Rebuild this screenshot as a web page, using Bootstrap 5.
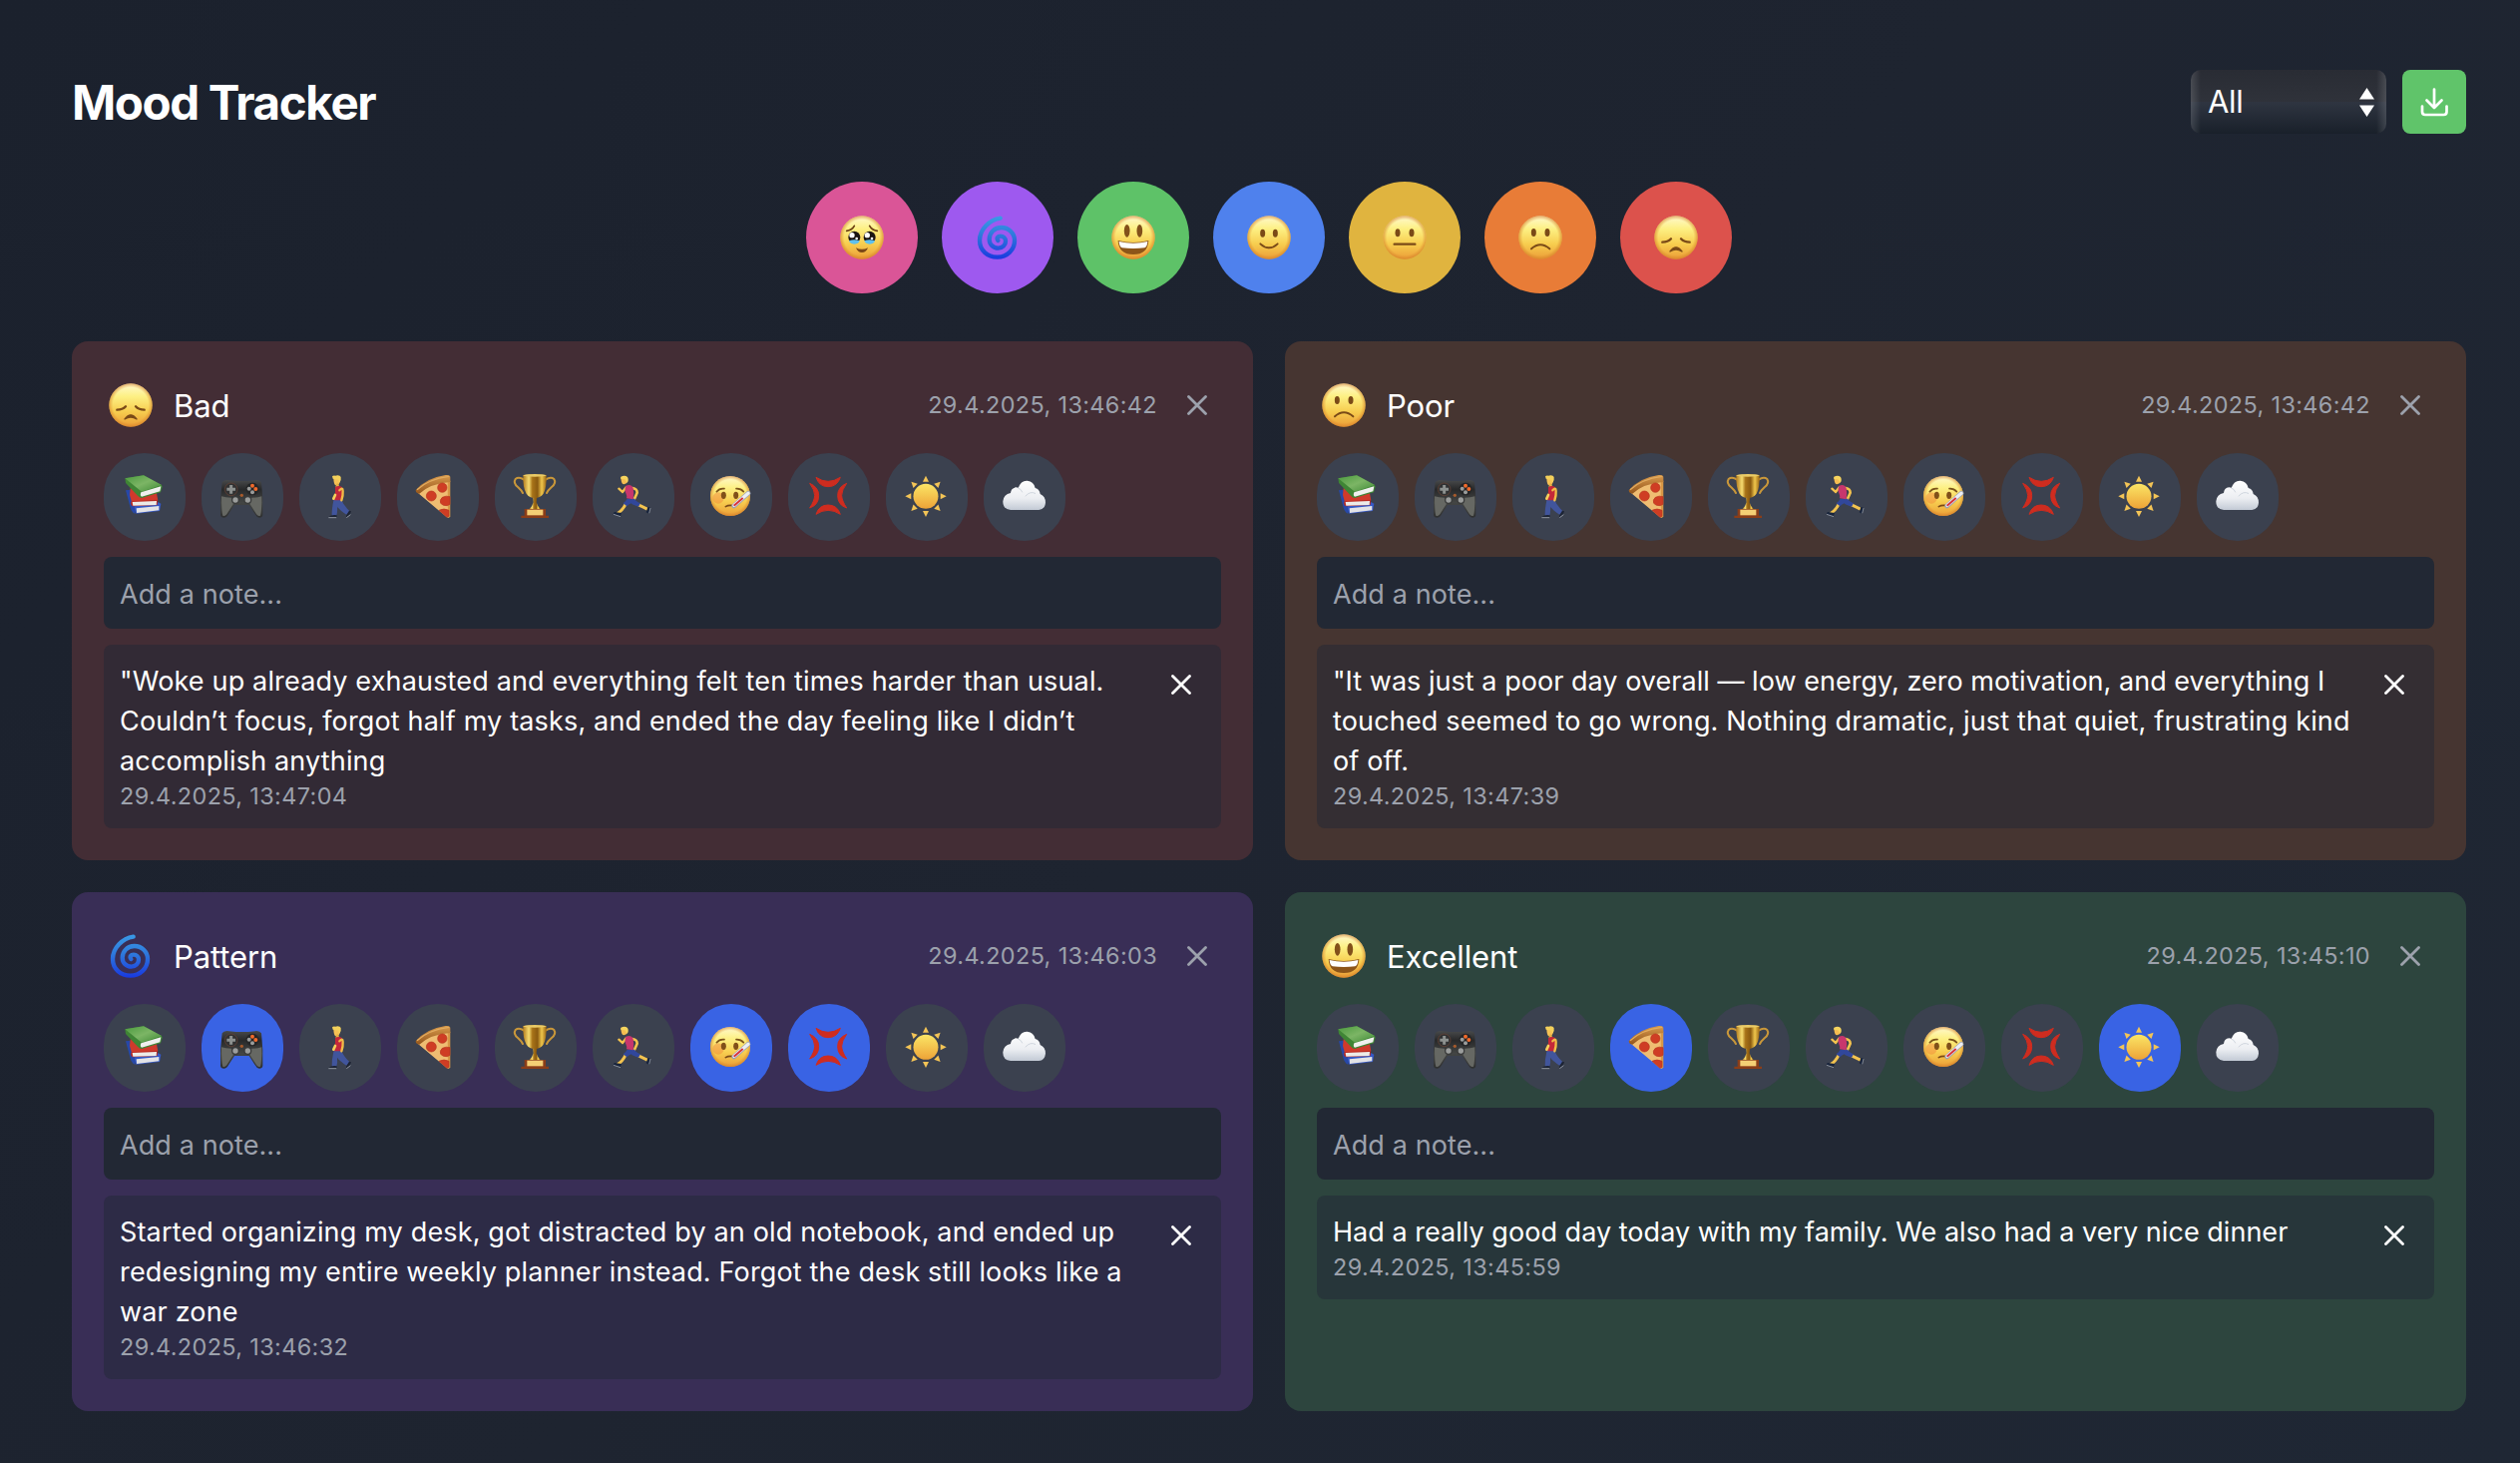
<!DOCTYPE html>
<html lang="en">
<head>
<meta charset="utf-8">
<title>Mood Tracker</title>
<link rel="stylesheet" href="https://cdn.jsdelivr.net/npm/bootstrap@5.3.0/dist/css/bootstrap.min.css">
<style>
body{font-family:Inter,"Liberation Sans",sans-serif;color:#fff;background:linear-gradient(135deg,#1b212d 0%,#1e2430 50%,#1f2734 100%);min-height:1466px;padding:70px 54px 52px 72px}
.app-title{font-size:47.5px;font-weight:700;line-height:62px;padding-top:2px;letter-spacing:-1.4px}
.filter-wrap{width:196px;height:64px}
.filter-select{appearance:none;width:100%;height:100%;border:0;border-radius:10px;color:#fff;font-size:31px;letter-spacing:-.3px;padding:1px 0 0 17px;outline:0;
background:linear-gradient(90deg,rgba(255,255,255,.14),transparent) 0 0/10px 100% no-repeat,linear-gradient(270deg,rgba(255,255,255,.14),transparent) 100% 0/10px 100% no-repeat,linear-gradient(#292c34 0,#2f323a 50%,#2f3541 50%,#19202a 100%)}
.filter-arrows{right:12px;top:18px;pointer-events:none}
.save-btn{width:64px;height:64px;border-radius:8px;background:#60c46a}
.mood-btn{width:112px;height:112px}
.mood-row{gap:24px;margin:48px 0}
.entries{--bs-gutter-x:32px;--bs-gutter-y:32px}
.entry{border:0;border-radius:16px;padding:32px;gap:16px;color:#fff;height:520px}
.entry-head{height:64px;padding:0 14px 0 5px}
.entry-name{font-size:31px;line-height:40px;margin-left:21px;padding-top:2px;letter-spacing:-.1px}
.stamp{font-size:23.4px;line-height:32px;color:#9ca1ac;letter-spacing:.38px}
.head-x{margin-left:30px}
.chips{gap:16px}
.chip{width:82px;height:88px;background:#3b414f;border-radius:44px}
.chip.on{background:#3963e4}
.note-input{height:72px;border:0;border-radius:8px;background:#222834;color:#fff;font-size:27px;letter-spacing:.1px;padding:2px 16px 0;line-height:40px}
.note-input::placeholder{color:#9ca1ac}
.note-box{border-radius:8px;background:rgba(33,40,53,.5);padding:16px 30px 16px 16px}
.note-text{font-size:27px;line-height:40px;white-space:nowrap;letter-spacing:.16px;padding-top:1px;margin-bottom:-1px}
.line-tight{letter-spacing:.03px}
.note-x{margin-top:14px}
.t-pink{background:#da5597}.t-purple{background:#9e59ef}.t-green{background:#5ec268}.t-blue{background:#4f81ed}.t-yellow{background:#e0b43f}.t-orange{background:#e87c37}.t-red{background:#dc524c}
.e-bad{background:#432d35}.e-poor{background:#463531}.e-pattern{background:#392e56}.e-excellent{background:#2d453e}
</style>
<script src="https://cdn.jsdelivr.net/npm/bootstrap@5.3.0/dist/js/bootstrap.bundle.min.js"></script>
</head>
<body>
<svg width="0" height="0" class="position-absolute" aria-hidden="true">
<defs>
<linearGradient id="gFace" x1="0" y1="0" x2="0" y2="1"><stop offset="0" stop-color="#fff9cf"/><stop offset=".3" stop-color="#fdf083"/><stop offset=".65" stop-color="#f7cd4f"/><stop offset="1" stop-color="#eb9d37"/></linearGradient>
<radialGradient id="gEdge"><stop offset=".82" stop-color="#d9822b" stop-opacity="0"/><stop offset="1" stop-color="#d07a26" stop-opacity=".6"/></radialGradient>
<linearGradient id="gSwirl" gradientUnits="userSpaceOnUse" x1="0" y1="34" x2="0" y2="165"><stop offset="0" stop-color="#3a9be6"/><stop offset=".45" stop-color="#2e78dc"/><stop offset="1" stop-color="#1838df"/></linearGradient>
<linearGradient id="gGreen" x1="0" y1="0" x2="1" y2="1"><stop offset="0" stop-color="#4b9a3f"/><stop offset=".5" stop-color="#7cb565"/><stop offset="1" stop-color="#3f8a36"/></linearGradient>
<linearGradient id="gPad" x1="0" y1="0" x2="0" y2="1"><stop offset="0" stop-color="#484a4b"/><stop offset=".25" stop-color="#28292a"/><stop offset=".6" stop-color="#434544"/><stop offset="1" stop-color="#2f3030"/></linearGradient>
<linearGradient id="gCup" x1="0" y1="0" x2="1" y2="0"><stop offset="0" stop-color="#b07a1e"/><stop offset=".25" stop-color="#f6dc70"/><stop offset=".4" stop-color="#a87318"/><stop offset=".62" stop-color="#8a5a10"/><stop offset=".8" stop-color="#efc64c"/><stop offset="1" stop-color="#9a6614"/></linearGradient>
<linearGradient id="gSun" x1="0" y1="0" x2="0" y2="1"><stop offset="0" stop-color="#fbe565"/><stop offset="1" stop-color="#eda337"/></linearGradient>
<linearGradient id="gCloud" x1="0" y1="0" x2="0" y2="1"><stop offset="0" stop-color="#fff"/><stop offset=".6" stop-color="#eceef2"/><stop offset="1" stop-color="#c3cad5"/></linearGradient>
<linearGradient id="gCrust" x1="0" y1="0" x2="0" y2="1"><stop offset="0" stop-color="#d99a4c"/><stop offset="1" stop-color="#94561c"/></linearGradient>
<g id="ball"><circle cx="66" cy="66" r="65" fill="url(#gFace)"/><circle cx="66" cy="66" r="65" fill="url(#gEdge)"/></g>

<symbol id="m-tears" viewBox="0 0 132 132"><use href="#ball"/><g transform="translate(-36 -33)"><path d="M56 79Q72 77 79 64M148 79Q132 77 125 64" fill="none" stroke="#6b3f12" stroke-width="5" stroke-linecap="round"/><circle cx="79" cy="98" r="18" fill="#1b1512"/><circle cx="125" cy="98" r="18" fill="#1b1512"/><path d="M63 109Q79 103 95 109Q92 119 79 119Q67 119 63 109ZM109 109Q125 103 141 109Q138 119 125 119Q113 119 109 109Z" fill="#5fc0ee"/><circle cx="72" cy="92" r="8" fill="#fff"/><circle cx="118" cy="92" r="8" fill="#fff"/><circle cx="86" cy="102" r="4" fill="#fff"/><circle cx="132" cy="102" r="4" fill="#fff"/><path d="M84 130Q102 139 120 130Q115 144 102 144Q89 144 84 130Z" fill="#7a4717"/></g></symbol>
<symbol id="m-swirl" viewBox="444 33 132 132"><path d="M518 41C485 46 456 75 456 108C456 138 480 158 509 158C538 158 561 136 561 108C561 86 543 69 521 69C500 69 485 85 485 104C485 120 497 131 512 131C525 131 534 121 534 110C534 101 527 95 519 95C510 95 506 101 511 108" fill="none" stroke="url(#gSwirl)" stroke-width="13" stroke-linecap="round"/></symbol>
<symbol id="m-grin" viewBox="0 0 132 132"><use href="#ball"/><ellipse cx="47" cy="46" rx="8.500" ry="19" fill="#82501a"/><ellipse cx="85" cy="46" rx="8.500" ry="19" fill="#82501a"/><path d="M20 75Q66 87 112 75Q110 117 66 117Q22 117 20 75Z" fill="#8d5519"/><path d="M23 78Q66 89 109 78Q108 94 100 97Q66 101 32 97Q24 94 23 78Z" fill="#fff"/></symbol>
<symbol id="m-smile" viewBox="0 0 132 132"><use href="#ball"/><ellipse cx="47" cy="53" rx="7.500" ry="12" fill="#7a4a17"/><ellipse cx="85" cy="53" rx="7.500" ry="12" fill="#7a4a17"/><path d="M40 85Q66 109 92 85" fill="none" stroke="#7a4a17" stroke-width="5.500" stroke-linecap="round"/></symbol>
<symbol id="m-flat" viewBox="0 0 132 132"><use href="#ball"/><ellipse cx="45" cy="52" rx="7.500" ry="12" fill="#7a4a17"/><ellipse cx="87" cy="52" rx="7.500" ry="12" fill="#7a4a17"/><path d="M35 86H97" stroke="#7a4a17" stroke-width="7" stroke-linecap="round"/></symbol>
<symbol id="m-frown" viewBox="0 0 132 132"><use href="#ball"/><ellipse cx="46" cy="51" rx="7.500" ry="12" fill="#7a4a17"/><ellipse cx="87" cy="51" rx="7.500" ry="12" fill="#7a4a17"/><path d="M39 100Q66 76 94 100" fill="none" stroke="#7a4a17" stroke-width="6" stroke-linecap="round"/></symbol>
<symbol id="m-sad" viewBox="0 0 132 132"><use href="#ball"/><path d="M25 80Q42 80 51 70M107 80Q90 80 81 70" fill="none" stroke="#7a4a17" stroke-width="7" stroke-linecap="round"/><path d="M48 108Q66 83 84 108Q66 96 48 108Z" fill="#7a4a17" stroke="#7a4a17" stroke-width="4" stroke-linejoin="round"/></symbol>

<symbol id="a-books" viewBox="12 12 246 264"><path d="M78 124L92 122L110 176L106 194Q96 190 92 176Z" fill="#2748a8"/><path d="M104 172L176 160L184 164L180 186L109 194Z" fill="#3558c4"/><path d="M110 178L178 171L178 184L111 192Z" fill="#e3e3e6"/><path d="M92 118L170 128L175 154L96 160L90 138Z" fill="#cf3a2c"/><path d="M96 157L174 152L173 168L100 172Q92 170 94 160Z" fill="#b92a22"/><path d="M98 159L171 156L170 168L100 170Z" fill="#ecebe8"/><path d="M76 88L132 79L186 108L188 113L183 130L126 147Q120 147 114 140L78 102Z" fill="#3f8535"/><path d="M76 88L132 79L186 108L126 128Z" fill="url(#gGreen)"/><path d="M124 130L184 112L181 127L126 143Q120 140 124 130Z" fill="#f0f0ee"/></symbol>
<symbol id="a-pad" viewBox="306 12 246 264"><path d="M368 100Q372 94 382 93L410 96H446L472 93Q482 94 486 100L490 150V198Q489 206 480 206Q472 205 466 194L449 168H405L388 194Q382 206 373 206Q364 206 363 198V150Z" fill="url(#gPad)"/><path d="M366 142Q378 146 396 146L402 164L382 196Q376 204 370 200Q366 190 366 142ZM487 142Q475 146 457 146L451 164L471 196Q477 204 483 200Q487 190 487 142Z" fill="#666863"/><circle cx="395" cy="121" r="19" fill="#303132" stroke="#6d4536" stroke-width="2"/><path d="M395 108V134M382 121H408" stroke="#8d918f" stroke-width="9"/><circle cx="459" cy="120" r="19" fill="#252627"/><circle cx="459" cy="110" r="6" fill="#f16a2b"/><circle cx="469" cy="120" r="6" fill="#f16a2b"/><circle cx="449" cy="119" r="6" fill="#9a9c9b"/><circle cx="459" cy="130" r="6" fill="#9a9c9b"/><circle cx="427" cy="139" r="5" fill="#a65a2c"/><circle cx="408" cy="153" r="12" fill="#3a3b3b"/><circle cx="445" cy="153" r="12" fill="#3a3b3b"/><circle cx="408" cy="153" r="8" fill="#9b9d9c"/><circle cx="445" cy="153" r="8" fill="#9b9d9c"/></symbol>
<symbol id="a-walk" viewBox="600 12 246 264"><path d="M703 86H722Q725 96 720 104Q716 109 708 108Q703 102 703 86Z" fill="#f6c255"/><path d="M699 82Q702 79 708 80Q722 77 725 84Q727 94 721 101L717 92L701 89Z" fill="#f3d05b"/><path d="M711 104L718 103L720 113H709Z" fill="#eab043"/><path d="M704 150L727 152Q732 168 751 186L742 197Q722 184 714 173Q716 186 711 204H698Q697 180 704 150Z" fill="#41559c"/><path d="M708 115Q718 108 728 114Q735 128 729 154H705Q707 138 708 130Z" fill="#c4283a"/><path d="M721 124Q731 113 731 126Q732 140 727 154" fill="none" stroke="#f1bb47" stroke-width="7" stroke-linecap="round"/><path d="M703 149L708 138" stroke="#f6d15b" stroke-width="8" stroke-linecap="round"/><path d="M688 204Q698 196 713 199V206H688ZM741 200L750 185L756 187L752 198L742 206Z" fill="#1d2434"/><path d="M688 206H712M742 206L754 197" stroke="#c7ccd3" stroke-width="2"/></symbol>
<symbol id="a-pizza" viewBox="894 12 246 264"><path d="M957 132Q992 100 1053 94L1051 205Q1046 208 1040 202Z" fill="#efbd72"/><path d="M1046 95H1054V204L1047 206Z" fill="#d99846"/><path d="M950 124Q980 87 1040 78Q1055 76 1054 86V99Q995 103 961 134Q951 134 950 124Z" fill="url(#gCrust)"/><path d="M954 122Q988 90 1050 82" fill="none" stroke="#e1ab60" stroke-width="4"/><g fill="#cf3d24" stroke="#b83820" stroke-width="2"><circle cx="1030" cy="116" r="14"/><circle cx="997" cy="141" r="15"/><path d="M1053 143Q1042 139 1030 145Q1021 153 1025 163Q1032 172 1045 170L1053 166Z"/><path d="M1020 184Q1035 176 1050 184V202L1044 205Z"/></g></symbol>
<symbol id="a-cup" viewBox="18 12 246 264"><path d="M106 92Q90 82 80 90Q72 102 88 115Q98 124 102 132M170 92Q186 82 196 90Q204 102 188 115Q178 124 174 132" fill="none" stroke="#c9973a" stroke-width="6" stroke-linecap="round"/><path d="M132 140H145L143 160Q145 170 155 180H122Q132 170 134 160Z" fill="url(#gCup)"/><path d="M103 78Q138 73 173 78Q174 118 164 134Q154 147 138 147Q122 147 113 134Q102 118 103 78Z" fill="url(#gCup)"/><ellipse cx="138" cy="79" rx="35" ry="4" fill="#eacb68"/><path d="M107 180H171V200H180V207H97V200H107Z" fill="#8a3d18"/><path d="M115 182H163V199H115Z" fill="#f4cf75"/></symbol>
<symbol id="a-run" viewBox="312 12 246 264"><path d="M432 117Q446 119 446 131L438 149" fill="none" stroke="#f4c34e" stroke-width="8" stroke-linecap="round" stroke-linejoin="round"/><path d="M413 115L402 129L391 119" fill="none" stroke="#f4c34e" stroke-width="7" stroke-linecap="round" stroke-linejoin="round"/><path d="M397 84H417V99Q412 107 403 105Q398 102 397 84Z" fill="#f5bd51"/><path d="M397 83Q409 77 417 84Q422 94 416 101L409 91L397 90Z" fill="#f6d45e"/><path d="M411 166Q402 184 389 192M447 166L478 181" fill="none" stroke="#f3c34f" stroke-width="9" stroke-linecap="round"/><path d="M416 149H439Q440 156 456 163L450 173Q433 169 428 163Q421 166 415 172L404 163Q412 157 416 149Z" fill="#31479b"/><path d="M412 110Q428 103 434 117Q437 130 434 151L414 148Q416 140 412 133Q407 124 412 110Z" fill="#c7366d"/><path d="M377 189L399 192L396 201L375 195ZM478 174L486 176L481 194L473 190Z" fill="#18243c"/><path d="M375 196L396 203M482 193L486 177" stroke="#aab2bd" stroke-width="2"/></symbol>
<symbol id="a-sick" viewBox="606 12 246 264"><circle cx="726" cy="141" r="60" fill="url(#gFace)"/><circle cx="726" cy="141" r="60" fill="url(#gEdge)"/><circle cx="690" cy="147" r="17" fill="#f07838" opacity=".4"/><path d="M685 128Q694 117 708 119M744 119Q757 118 766 128" fill="none" stroke="#7c541b" stroke-width="5" stroke-linecap="round"/><ellipse cx="706" cy="139" rx="7.500" ry="11" fill="#805019"/><ellipse cx="743" cy="139" rx="7.500" ry="11" fill="#805019"/><path d="M712 173Q723 166 740 171" fill="none" stroke="#7a4a17" stroke-width="5" stroke-linecap="round"/><path d="M737 171L780 133" stroke="#9da3b0" stroke-width="14" stroke-linecap="round"/><path d="M738 169L780 133" stroke="#eceef3" stroke-width="10" stroke-linecap="round"/><path d="M737 170L764 147" stroke="#d8333b" stroke-width="6"/></symbol>
<symbol id="a-anger" viewBox="900 12 246 264"><g fill="#cf2c1f" stroke="#cf2c1f" stroke-width="3" stroke-linejoin="round"><path d="M984 85Q1020 109 1057 85Q1048 113 1020 113Q993 113 984 85Z"/><path d="M984 196Q1020 172 1057 196Q1048 168 1020 168Q993 168 984 196Z"/><path d="M965 103Q992 114 992 140Q992 168 965 177Q980 154 980 139Q980 124 965 103Z"/><path d="M1076 103Q1049 114 1049 140Q1049 168 1076 177Q1061 154 1061 139Q1061 124 1076 103Z"/></g></symbol>
<symbol id="a-sun" viewBox="1194 12 246 264"><circle cx="1314" cy="142" r="37.500" fill="url(#gSun)"/><g fill="#f3c456"><path id="ray" d="M1305 98L1314 80L1323 98Z"/><use href="#ray" transform="rotate(45 1314 142)"/><use href="#ray" transform="rotate(90 1314 142)"/><use href="#ray" transform="rotate(135 1314 142)"/><use href="#ray" transform="rotate(180 1314 142)"/><use href="#ray" transform="rotate(225 1314 142)"/><use href="#ray" transform="rotate(270 1314 142)"/><use href="#ray" transform="rotate(315 1314 142)"/></g></symbol>
<symbol id="a-cloud" viewBox="0 0 246 264"><path d="M81 171Q57 168 58 145Q60 124 81 120Q82 105 97 103Q101 103 104 105Q112 82 131 83Q151 85 155 105Q168 108 170 123Q186 130 186 149Q184 169 166 171Z" fill="url(#gCloud)"/><path d="M104 105Q113 108 116 117M126 129Q140 113 155 121" fill="none" stroke="#cfd5de" stroke-width="3" stroke-linecap="round"/></symbol>
<symbol id="i-x" viewBox="0 0 20 20"><path d="M1.500 1.500L18.500 18.500M18.500 1.500L1.500 18.500" stroke="currentColor" stroke-width="2.800" stroke-linecap="round" fill="none"/></symbol>
</defs>
</svg>

<header class="d-flex justify-content-between align-items-center">
<h1 class="app-title mb-0">Mood Tracker</h1>
<div class="d-flex gap-3">
<div class="filter-wrap position-relative"><select class="filter-select" aria-label="Filter"><option>All</option></select>
<svg class="filter-arrows position-absolute" width="15" height="29" viewBox="0 0 15 29" fill="#fff"><path d="M7.500 0L15 11.500H0ZM7.500 29L15 17.500H0Z"/></svg></div>
<button class="btn save-btn border-0 p-0 d-flex align-items-center justify-content-center" aria-label="Download"><svg width="32" height="32" viewBox="0 0 32 32" fill="none" stroke="#fff" stroke-width="2.700" stroke-linecap="round" stroke-linejoin="round"><path d="M16 3.500V21.500M8.500 14.500L16 22L23.500 14.500M4 20.500V26Q4 29 7 29H25.500Q28.500 29 28.500 26V20.500"/></svg></button>
</div>
</header>

<div class="mood-row d-flex justify-content-center">
<button class="mood-btn btn border-0 p-0 rounded-circle t-pink"><svg width="44" height="44"><use href="#m-tears"/></svg></button>
<button class="mood-btn btn border-0 p-0 rounded-circle t-purple"><svg width="44" height="44"><use href="#m-swirl"/></svg></button>
<button class="mood-btn btn border-0 p-0 rounded-circle t-green"><svg width="44" height="44"><use href="#m-grin"/></svg></button>
<button class="mood-btn btn border-0 p-0 rounded-circle t-blue"><svg width="44" height="44"><use href="#m-smile"/></svg></button>
<button class="mood-btn btn border-0 p-0 rounded-circle t-yellow"><svg width="44" height="44"><use href="#m-flat"/></svg></button>
<button class="mood-btn btn border-0 p-0 rounded-circle t-orange"><svg width="44" height="44"><use href="#m-frown"/></svg></button>
<button class="mood-btn btn border-0 p-0 rounded-circle t-red"><svg width="44" height="44"><use href="#m-sad"/></svg></button>
</div>

<main class="row row-cols-2 entries">
<div class="col"><section class="card entry e-bad">
<div class="entry-head d-flex align-items-center"><svg width="44" height="44"><use href="#m-sad"/></svg><span class="entry-name">Bad</span><span class="stamp ms-auto">29.4.2025, 13:46:42</span><svg class="head-x stamp" width="20" height="20"><use href="#i-x"/></svg></div>
<div class="chips d-flex" data-on=""></div>
<input class="note-input w-100" placeholder="Add a note...">
<div class="note-box d-flex justify-content-between align-items-start"><div><div class="note-text">"Woke up already exhausted and everything felt ten times harder than usual.<br>Couldn’t focus, forgot half my tasks, and ended the day feeling like I didn’t<br>accomplish anything</div><div class="stamp">29.4.2025, 13:47:04</div></div><svg class="note-x" width="20" height="20"><use href="#i-x"/></svg></div>
</section></div>

<div class="col"><section class="card entry e-poor">
<div class="entry-head d-flex align-items-center"><svg width="44" height="44"><use href="#m-frown"/></svg><span class="entry-name">Poor</span><span class="stamp ms-auto">29.4.2025, 13:46:42</span><svg class="head-x stamp" width="20" height="20"><use href="#i-x"/></svg></div>
<div class="chips d-flex" data-on=""></div>
<input class="note-input w-100" placeholder="Add a note...">
<div class="note-box d-flex justify-content-between align-items-start"><div><div class="note-text"><span class="line-tight">"It was just a poor day overall — low energy, zero motivation, and everything I</span><br>touched seemed to go wrong. Nothing dramatic, just that quiet, frustrating kind<br>of off.</div><div class="stamp">29.4.2025, 13:47:39</div></div><svg class="note-x" width="20" height="20"><use href="#i-x"/></svg></div>
</section></div>

<div class="col"><section class="card entry e-pattern">
<div class="entry-head d-flex align-items-center"><svg width="44" height="44"><use href="#m-swirl"/></svg><span class="entry-name">Pattern</span><span class="stamp ms-auto">29.4.2025, 13:46:03</span><svg class="head-x stamp" width="20" height="20"><use href="#i-x"/></svg></div>
<div class="chips d-flex" data-on="pad sick anger"></div>
<input class="note-input w-100" placeholder="Add a note...">
<div class="note-box d-flex justify-content-between align-items-start"><div><div class="note-text">Started organizing my desk, got distracted by an old notebook, and ended up<br>redesigning my entire weekly planner instead. Forgot the desk still looks like a<br>war zone</div><div class="stamp">29.4.2025, 13:46:32</div></div><svg class="note-x" width="20" height="20"><use href="#i-x"/></svg></div>
</section></div>

<div class="col"><section class="card entry e-excellent">
<div class="entry-head d-flex align-items-center"><svg width="44" height="44"><use href="#m-grin"/></svg><span class="entry-name">Excellent</span><span class="stamp ms-auto">29.4.2025, 13:45:10</span><svg class="head-x stamp" width="20" height="20"><use href="#i-x"/></svg></div>
<div class="chips d-flex" data-on="pizza sun"></div>
<input class="note-input w-100" placeholder="Add a note...">
<div class="note-box d-flex justify-content-between align-items-start"><div><div class="note-text"><span class="line-tight">Had a really good day today with my family. We also had a very nice dinner</span></div><div class="stamp">29.4.2025, 13:45:59</div></div><svg class="note-x" width="20" height="20"><use href="#i-x"/></svg></div>
</section></div>
</main>
<script>
// Fill each entry's activity row; data-on lists the selected activities.
const activities = ['books','pad','walk','pizza','cup','run','sick','anger','sun','cloud'];
document.querySelectorAll('.chips').forEach(row => {
  const on = row.dataset.on.split(' ');
  row.innerHTML = activities.map(a => `<button class="chip btn border-0 p-0 d-flex${on.includes(a) ? ' on' : ''}"><svg width="82" height="88"><use href="#a-${a}"/></svg></button>`).join('');
});
</script>
</body>
</html>
